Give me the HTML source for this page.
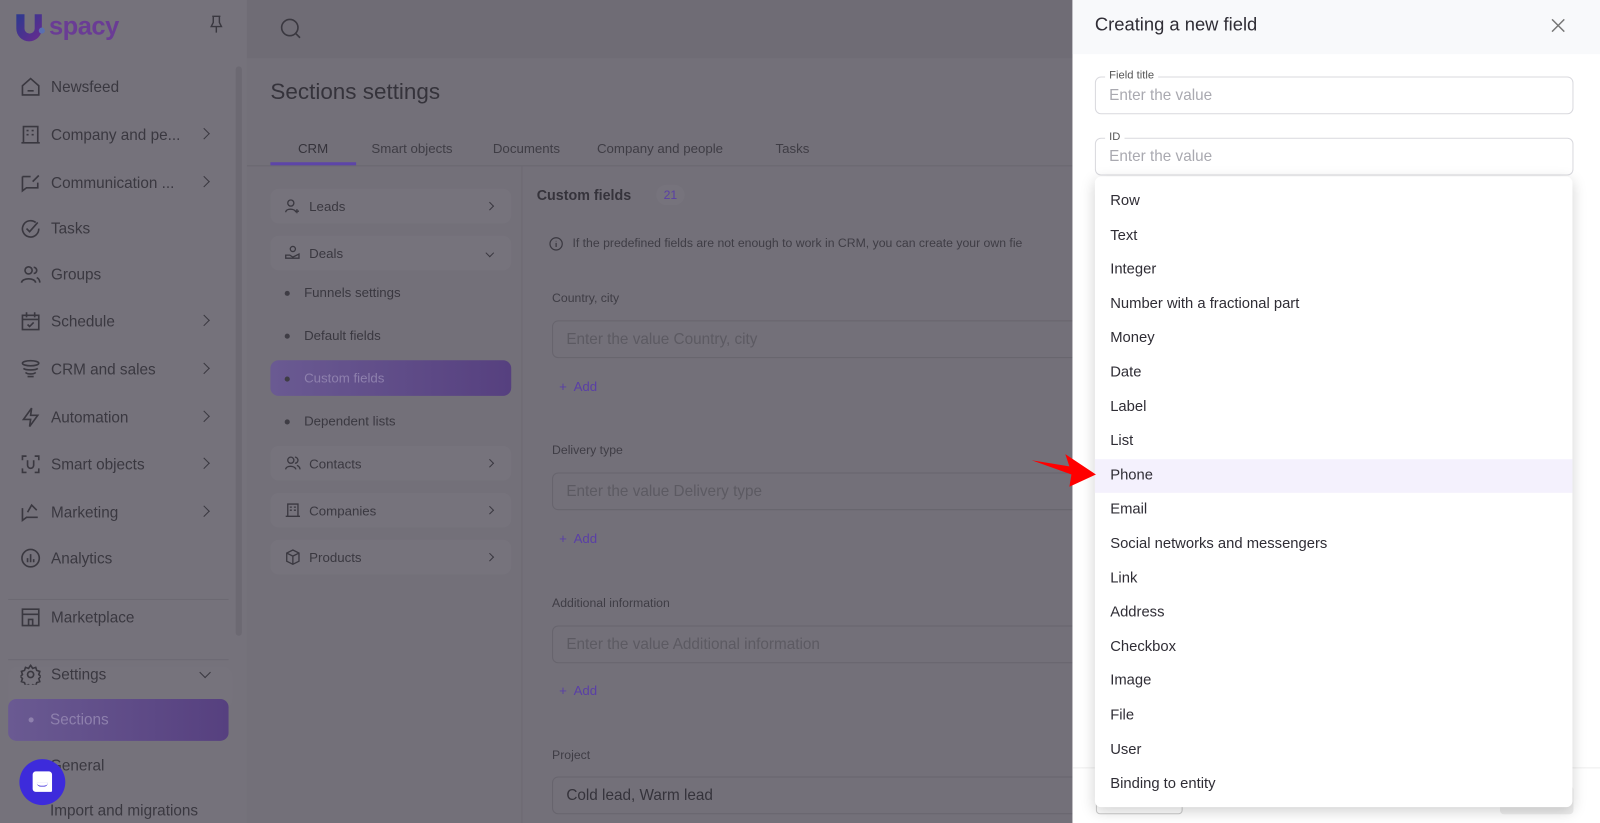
<!DOCTYPE html>
<html><head><meta charset="utf-8"><style>
*{box-sizing:border-box;margin:0;padding:0}
html,body{width:1600px;height:823px;overflow:hidden;background:#737079}
#w{position:absolute;left:0;top:0;width:1568px;height:807px;transform:scale(1.020408);transform-origin:0 0;font-family:"Liberation Sans",sans-serif;background:#737079;color:#3c3a42;overflow:hidden}
.abs{position:absolute}
.sb{left:0;top:0;width:242px;height:807px;background:#75727b}
.nav{position:absolute;left:20px;font-size:15px;color:#3a3840;display:flex;align-items:center}
.nav svg{width:20px;height:20px;margin-right:10px;stroke:#3a3840;fill:none;stroke-width:1.6}
.chev{position:absolute;left:196px;width:8px;height:8px;border-right:1.6px solid #3a3840;border-top:1.6px solid #3a3840;transform:rotate(45deg)}
.hdr{left:242px;top:0;width:810px;height:57px;background:#6f6c75}
.sub{position:absolute;left:265px;width:236px;height:34px;border-radius:8px;background:#76737c;font-size:13px;color:#3a3840;display:flex;align-items:center;padding-left:38px}
.sub svg{position:absolute;left:14px;top:9px;width:16px;height:16px;fill:none;stroke:#3a3840;stroke-width:1.3}
.subc{position:absolute;right:18px;width:6px;height:6px;border-right:1.4px solid #3a3840;border-top:1.4px solid #3a3840;transform:rotate(45deg)}
.li{position:absolute;left:298px;font-size:13px;color:#3a3840}
.li:before{content:"";position:absolute;left:-19px;top:6px;width:5px;height:5px;border-radius:50%;background:#3f3d45}
.lbl{position:absolute;left:541px;font-size:12px;color:#3f3d45}
.inp{position:absolute;left:541px;width:520px;height:37px;border:1px solid #67646d;border-radius:6px;font-size:15px;color:#5c5a62;padding:9px 13px}
.add{position:absolute;left:548px;font-size:13px;color:#5a3fa6}
.drw{left:1051px;top:0;width:517px;height:807px;background:#fff}
.field{position:absolute;left:1073px;width:469px;height:37px;border:1px solid #d9d9de;border-radius:6px;font-size:15px;color:#a9a9b0;padding:9px 13px}
.field span{position:absolute;top:-8px;left:9px;background:#fff;padding:0 4px;font-size:11px;color:#555}
.dd{left:1073px;top:173px;width:468px;height:618px;background:#fff;border-radius:6px;box-shadow:0 4px 14px rgba(0,0,0,.18)}
.it{height:33.6px;line-height:33.6px;padding-left:15px;font-size:14.5px;color:#2f2d35}
</style></head><body><div id="w">
<div class="abs sb"></div>
<svg class="abs" style="left:14px;top:12px" width="30" height="32" viewBox="0 0 30 32"><defs><linearGradient id="g" x1="0" y1="0" x2="1" y2="1"><stop offset="0" stop-color="#2b3a8f"/><stop offset="1" stop-color="#6a2a8f"/></linearGradient></defs><path d="M2 2h8v14a5 5 0 0 0 10 0V2h7v14a12 12 0 0 1-25 0z" fill="url(#g)"/><circle cx="27" cy="18" r="3" fill="#5a6fb0"/></svg>
<div class="abs" style="left:48px;top:12px;font-size:25px;color:#6a3c95;font-weight:bold;letter-spacing:-0.5px">spacy</div>
<svg class="abs" style="left:205px;top:15px" width="14" height="18" viewBox="0 0 14 18" fill="none" stroke="#3a3840" stroke-width="1.4"><path d="M3 1h8M4 1v6l-2 4h10l-2-4V1M7 11v6"/></svg>
<div class="abs" style="left:231px;top:65px;width:6px;height:558px;border-radius:3px;background:#6c6972"></div>
<div class="nav" style="top:75px"><svg viewBox="0 0 20 20"><path d="M2 9l8-7 8 7v9H2z M7 14h6"/></svg>Newsfeed</div>
<div class="nav" style="top:122px"><svg viewBox="0 0 20 20"><path d="M3 2h14v16H3z M1 18h18 M6 6h2M11 6h2M6 10h2M11 10h2"/></svg>Company and pe...</div><div class="chev" style="top:127px"></div>
<div class="nav" style="top:169px"><svg viewBox="0 0 20 20"><path d="M2 4h8M2 4v14l4-3h11v-5 M12 9l6-6"/></svg>Communication ...</div><div class="chev" style="top:174px"></div>
<div class="nav" style="top:214px"><svg viewBox="0 0 20 20"><path d="M18 10a8 8 0 1 1-3-6 M6 10l3 3 8-9"/></svg>Tasks</div>
<div class="nav" style="top:259px"><svg viewBox="0 0 20 20"><circle cx="8" cy="6" r="3.5"/><path d="M1 18c1-5 13-5 14 0 M13 3a3 3 0 0 1 0 6 M16 13c2 1 3 3 3 5"/></svg>Groups</div>
<div class="nav" style="top:305px"><svg viewBox="0 0 20 20"><path d="M2 4h16v14H2z M6 1v5M14 1v5M2 8h16M7 13l2 2 4-4"/></svg>Schedule</div><div class="chev" style="top:310px"></div>
<div class="nav" style="top:352px"><svg viewBox="0 0 20 20"><ellipse cx="10" cy="4" rx="8" ry="2.5"/><path d="M3 9c2 2 12 2 14 0M5 13c2 2 8 2 10 0M7 17h6"/></svg>CRM and sales</div><div class="chev" style="top:357px"></div>
<div class="nav" style="top:399px"><svg viewBox="0 0 20 20"><path d="M11 1L3 12h7l-1 7 8-11h-7z"/></svg>Automation</div><div class="chev" style="top:404px"></div>
<div class="nav" style="top:445px"><svg viewBox="0 0 20 20"><path d="M2 6V2h4M14 2h4v4M18 14v4h-4M6 18H2v-4M7 6v5a3 3 0 0 0 6 0V6"/></svg>Smart objects</div><div class="chev" style="top:450px"></div>
<div class="nav" style="top:492px"><svg viewBox="0 0 20 20"><path d="M2 6v12l4-3h11 M7 10l4-7 5 5"/></svg>Marketing</div><div class="chev" style="top:497px"></div>
<div class="nav" style="top:537px"><svg viewBox="0 0 20 20"><circle cx="10" cy="10" r="8.5"/><path d="M7 14v-4M10 14V6M13 14v-3"/></svg>Analytics</div>
<div class="abs" style="left:8px;top:587px;width:216px;height:1px;background:#6c6972"></div>
<div class="nav" style="top:595px"><svg viewBox="0 0 20 20"><path d="M2 2h16v16H2z M2 7h16 M8 18v-6h4v6"/></svg>Marketplace</div>
<div class="abs" style="left:8px;top:646px;width:216px;height:1px;background:#6c6972"></div>
<div class="abs" style="left:8px;top:653px;width:220px;height:42px;border-radius:10px;background:#76737c"></div>
<div class="nav" style="top:651px"><svg viewBox="0 0 20 20"><circle cx="10" cy="10" r="3"/><path d="M10 1l2 3 3-1 1 3 3 1-1 3 2 2-2 2 1 3-3 1-1 3-3-1-2 3-2-3-3 1-1-3-3-1 1-3-2-2 2-2-1-3 3-1 1-3 3 1z"/></svg>Settings</div>
<div class="abs" style="left:197px;top:655px;width:8px;height:8px;border-right:1.6px solid #3a3840;border-bottom:1.6px solid #3a3840;transform:rotate(45deg)"></div>
<div class="abs" style="left:8px;top:685px;width:216px;height:41px;border-radius:8px;background:linear-gradient(90deg,#6a5a92,#56407f)"></div>
<div class="abs" style="left:28px;top:703px;width:5px;height:5px;border-radius:50%;background:#8e80ad"></div>
<div class="abs" style="left:49px;top:697px;font-size:15px;color:#8e80ad">Sections</div>
<div class="abs" style="left:49px;top:742px;font-size:15px;color:#3a3840">General</div>
<div class="abs" style="left:49px;top:786px;font-size:15px;color:#3a3840">Import and migrations</div>
<div class="abs" style="left:19px;top:744px;width:45px;height:45px;border-radius:50%;background:#3d2bdb"></div>
<div class="abs" style="left:32px;top:756px;width:19px;height:20px;border-radius:3px 3px 1px 3px;background:#fff"></div>
<div class="abs" style="left:36px;top:767px;width:11px;height:4px;border-bottom:1.5px solid #3d2bdb;border-radius:0 0 6px 6px"></div>

<div class="abs hdr"></div>
<svg class="abs" style="left:274px;top:17px" width="22" height="22" viewBox="0 0 22 22" fill="none" stroke="#3a3840" stroke-width="1.6"><circle cx="10" cy="10" r="8"/><path d="M16 16l4 4"/></svg>
<div class="abs" style="left:265px;top:77px;font-size:22px;color:#35333b">Sections settings</div>
<div class="abs" style="left:242px;top:162px;width:810px;height:1px;background:#6a6770"></div>
<div class="abs" style="left:292px;top:138px;font-size:13px;color:#35333b">CRM</div>
<div class="abs" style="left:265px;top:159px;width:84px;height:3px;background:#5d45a8"></div>
<div class="abs" style="left:364px;top:138px;font-size:13px;color:#3f3d45">Smart objects</div>
<div class="abs" style="left:483px;top:138px;font-size:13px;color:#3f3d45">Documents</div>
<div class="abs" style="left:585px;top:138px;font-size:13px;color:#3f3d45">Company and people</div>
<div class="abs" style="left:760px;top:138px;font-size:13px;color:#3f3d45">Tasks</div>
<div class="abs" style="left:511px;top:163px;width:1px;height:660px;background:#6c6972"></div>

<div class="sub" style="top:185px"><svg viewBox="0 0 16 16"><circle cx="6" cy="5" r="3"/><path d="M1 14c0-4 9-4 10 0M12 11v4M10 13h4"/></svg>Leads<div class="subc"></div></div>
<div class="sub" style="top:231px"><svg viewBox="0 0 16 16"><circle cx="8" cy="4" r="2.5"/><path d="M1 10h4l3 2 6-3v4H1z"/></svg>Deals<div class="subc" style="transform:rotate(135deg)"></div></div>
<div class="li" style="top:279px">Funnels settings</div>
<div class="li" style="top:321px">Default fields</div>
<div class="abs" style="left:265px;top:353px;width:236px;height:35px;border-radius:8px;background:linear-gradient(90deg,#6a5a92,#56407f)"></div>
<div class="li" style="top:363px;color:#8e80ad">Custom fields</div>
<div class="li" style="top:405px">Dependent lists</div>
<div class="sub" style="top:437px"><svg viewBox="0 0 16 16"><circle cx="6" cy="5" r="3"/><path d="M1 14c0-4 9-4 10 0M10 2a3 3 0 0 1 0 6M12 10c2 1 3 2 3 4"/></svg>Contacts<div class="subc"></div></div>
<div class="sub" style="top:483px"><svg viewBox="0 0 16 16"><path d="M3 2h10v12H3zM5 5h2M9 5h2M5 8h2M9 8h2M1 14h14"/></svg>Companies<div class="subc"></div></div>
<div class="sub" style="top:529px"><svg viewBox="0 0 16 16"><path d="M8 1l6 3v8l-6 3-6-3V4zM2 4l6 3 6-3M8 7v8"/></svg>Products<div class="subc"></div></div>

<div class="abs" style="left:526px;top:183px;font-size:14px;font-weight:bold;color:#35333b">Custom fields</div>
<div class="abs" style="left:643px;top:181px;width:28px;height:20px;border-radius:10px;background:#76737c;font-size:12px;color:#5a3fa6;text-align:center;line-height:20px">21</div>
<svg class="abs" style="left:538px;top:232px" width="14" height="14" viewBox="0 0 14 14" fill="none" stroke="#3a3840" stroke-width="1.2"><circle cx="7" cy="7" r="6"/><path d="M7 6v4M7 4v.5"/></svg>
<div class="abs" style="left:561px;top:231px;font-size:12px;color:#3f3d45;white-space:nowrap">If the predefined fields are not enough to work in CRM, you can create your own fie</div>
<div class="lbl" style="top:285px">Country, city</div>
<div class="inp" style="top:314px">Enter the value Country, city</div>
<div class="add" style="top:371px">+&nbsp; Add</div>
<div class="lbl" style="top:434px">Delivery type</div>
<div class="inp" style="top:463px">Enter the value Delivery type</div>
<div class="add" style="top:520px">+&nbsp; Add</div>
<div class="lbl" style="top:584px">Additional information</div>
<div class="inp" style="top:613px">Enter the value Additional information</div>
<div class="add" style="top:669px">+&nbsp; Add</div>
<div class="lbl" style="top:733px">Project</div>
<div class="inp" style="top:761px;color:#35333b">Cold lead, Warm lead</div>

<div class="abs drw"></div>
<div class="abs" style="left:1051px;top:0;width:517px;height:53px;background:#f8f9fb"></div>
<div class="abs" style="left:1073px;top:14px;font-size:18px;color:#2f2d35">Creating a new field</div>
<svg class="abs" style="left:1520px;top:18px" width="14" height="14" viewBox="0 0 14 14" stroke="#777" stroke-width="1.5"><path d="M1 1l12 12M13 1L1 13"/></svg>
<div class="field" style="top:75px"><span>Field title</span>Enter the value</div>
<div class="field" style="top:135px"><span>ID</span>Enter the value</div>
<div class="abs" style="left:1051px;top:752px;width:517px;height:1px;background:#eee"></div>
<div class="abs" style="left:1074px;top:770px;width:85px;height:28px;border:1px solid #ccc;border-radius:4px"></div>
<div class="abs" style="left:1470px;top:770px;width:72px;height:28px;border-radius:4px;background:#eee"></div>

<div class="abs dd">
<div style="height:8px"></div>
<div class="it">Row</div><div class="it">Text</div><div class="it">Integer</div><div class="it">Number with a fractional part</div><div class="it">Money</div><div class="it">Date</div><div class="it">Label</div><div class="it">List</div><div class="it" style="background:#f4f1fd">Phone</div><div class="it">Email</div><div class="it">Social networks and messengers</div><div class="it">Link</div><div class="it">Address</div><div class="it">Checkbox</div><div class="it">Image</div><div class="it">File</div><div class="it">User</div><div class="it">Binding to entity</div>
</div>
<svg class="abs" style="left:1008px;top:440px" width="70" height="40" viewBox="0 0 70 40"><path d="M3 11L40 17L36 5L66 25L40 37L42 25Z" fill="#f00"/></svg>
</div></body></html>
